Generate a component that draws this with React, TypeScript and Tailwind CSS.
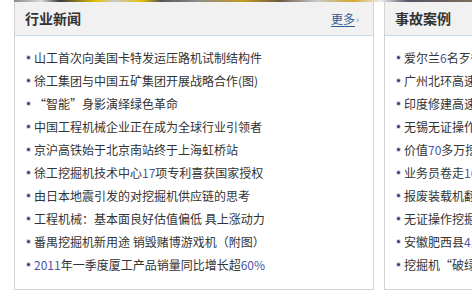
import React from "react"

const font = { fontFamily: '"SimSun", "Noto Sans CJK SC", "Liberation Sans", sans-serif' }

const newsItems = [
  "山工首次向美国卡特发运压路机试制结构件",
  "徐工集团与中国五矿集团开展战略合作(图)",
  "“智能”身影演绎绿色革命",
  "中国工程机械企业正在成为全球行业引领者",
  "京沪高铁始于北京南站终于上海虹桥站",
  "徐工挖掘机技术中心17项专利喜获国家授权",
  "由日本地震引发的对挖掘机供应链的思考",
  "工程机械：基本面良好估值偏低 具上涨动力",
  "番禺挖掘机新用途 销毁赌博游戏机（附图）",
  "2011年一季度厦工产品销量同比增长超60%",
]

const caseItems = [
  "爱尔兰6名歹徒驾挖掘机抢劫银行",
  "广州北环高速路段挖掘机翻车",
  "印度修建高速公路发生塌方事故",
  "无锡无证操作挖掘机致人死亡",
  "价值70多万挖掘机被盗案告破",
  "业务员卷走16万元货款潜逃",
  "报废装载机翻车司机受伤",
  "无证操作挖掘机酿成事故",
  "安徽肥西县4岁男童被挖掘机碾压",
  "挖掘机“破绿”事件引关注",
]

// digits render with a blue tint in the reference
function Line({ text }: { text: string }) {
  const parts = text.split(/(\d+%?)/)
  return (
    <>
      {parts.map((p, i) =>
        /\d/.test(p) ? (
          <span key={i} className="text-[#4a55a6]">
            {p}
          </span>
        ) : (
          <span key={i}>{p}</span>
        )
      )}
    </>
  )
}

function Panel({ title, items, more, className }: { title: string; items: string[]; more?: boolean; className: string }) {
  return (
    <div className={`shrink-0 border-x border-b border-[#d3d3d3] bg-white ${className}`}>
      <div className="flex h-[34px] items-center justify-between border-b border-[#c6dbea] bg-[#f1f1f1] pl-[10px] pr-[14px]">
        <span className="text-[14px] font-bold text-[#333]">{title}</span>
        {more && (
          <span className="flex items-center text-[12px] text-[#2d5d92]">
            <span className="underline underline-offset-2">更多</span>
            <span className="ml-[1px] text-[10px] text-[#8a9bb0]">›</span>
          </span>
        )}
      </div>
      <ul className="pb-[13px] pl-[12px] pt-[10px]">
        {items.map((t) => (
          <li key={t} className="flex h-[23px] items-center whitespace-nowrap text-[12px] leading-[23px] text-[#333]">
            <span className="mr-[4px] h-[3px] w-[3px] shrink-0 rounded-full bg-[#34406a] ring-1 ring-[#8d97b3]/40" />
            <Line text={t} />
          </li>
        ))}
      </ul>
    </div>
  )
}

export default function App() {
  return (
    <div className="h-[297px] w-[472px] overflow-hidden bg-white" style={font}>
      {/* photo strip at the very top */}
      <div className="ml-[14px] h-[2px] bg-[linear-gradient(90deg,#8a8a8a_0%,#d8d8d8_6%,#3a3a3a_10%,#e2c400_18%,#c9c9c9_22%,#e0c000_28%,#555_32%,#8b8b8b_40%,#c49a20_50%,#6b5a40_58%,#c9c9c9_66%,#d0a82a_74%,#eee_80%,#556_86%,#7b6b5a_100%)]" />
      <div className="flex gap-[10px] pl-[14px]">
        <Panel title="行业新闻" items={newsItems} more className="w-[360px]" />
        <Panel title="事故案例" items={caseItems} className="w-[360px]" />
      </div>
    </div>
  )
}
